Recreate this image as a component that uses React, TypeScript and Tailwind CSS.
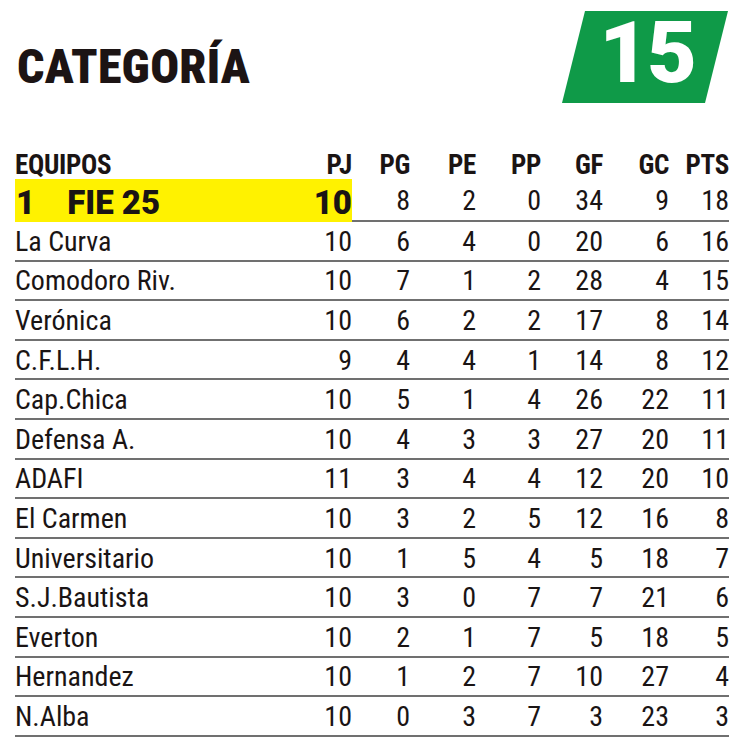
const rows = [
  ["La Curva", 10, 6, 4, 0, 20, 6, 16],
  ["Comodoro Riv.", 10, 7, 1, 2, 28, 4, 15],
  ["Verónica", 10, 6, 2, 2, 17, 8, 14],
  ["C.F.L.H.", 9, 4, 4, 1, 14, 8, 12],
  ["Cap.Chica", 10, 5, 1, 4, 26, 22, 11],
  ["Defensa A.", 10, 4, 3, 3, 27, 20, 11],
  ["ADAFI", 11, 3, 4, 4, 12, 20, 10],
  ["El Carmen", 10, 3, 2, 5, 12, 16, 8],
  ["Universitario", 10, 1, 5, 4, 5, 18, 7],
  ["S.J.Bautista", 10, 3, 0, 7, 7, 21, 6],
  ["Everton", 10, 2, 1, 7, 5, 18, 5],
  ["Hernandez", 10, 1, 2, 7, 10, 27, 4],
  ["N.Alba", 10, 0, 3, 7, 3, 23, 3],
];

// widths of the stat columns after PJ: PG PE PP GF GC PTS
const cols = ["w-[58px]", "w-[66px]", "w-[65px]", "w-[62px]", "w-[66px]", "w-[60px]"];

function Stats({ values }: { values: (string | number)[] }) {
  return (
    <>
      {values.map((v, i) => (
        <div key={i} className={`${cols[i]} shrink-0 text-right`}>
          {v}
        </div>
      ))}
    </>
  );
}

export default function App() {
  return (
    <div className="w-[750px] h-[750px] bg-white text-[#1a1414] font-['Roboto_Condensed',sans-serif] overflow-hidden">
      {/* Title */}
      <div className="flex justify-between items-start h-[144px]">
        <h1 className="mt-[43px] ml-[17px] text-[48px] leading-none font-black tracking-[0.2px] text-[#1c1414]">
          CATEGORÍA
        </h1>
        <div className="mt-[11px] mr-[22px] w-[166px] h-[92px] bg-[#0f9a48] [clip-path:polygon(23px_0,166px_0,143px_92px,0_92px)] flex items-center justify-center">
          <span className="ml-[4px] mt-[-8px] text-white text-[86px] leading-none font-black font-['Roboto',sans-serif] tracking-[-2px]">
            15
          </span>
        </div>
      </div>

      {/* Table */}
      <div className="ml-[15px] w-[718px] pr-[4px]">
        <div className="flex items-end h-[35px] text-[27px] leading-none font-bold tracking-[-0.3px]">
          <div className="w-[337px] flex justify-between">
            <span>EQUIPOS</span>
            <span>PJ</span>
          </div>
          <Stats values={["PG", "PE", "PP", "GF", "GC", "PTS"]} />
        </div>

        <div className="flex items-center h-[43px] border-b-2 border-[#707070] text-[28px] leading-none">
          <div className="w-[337px] h-[43px] -mb-[2px] bg-[#fff200] flex justify-between items-center pt-[3px] font-['Roboto',sans-serif] font-black text-[33px]">
            <span className="flex gap-[32px] ml-[1px]">
              <span>1</span>
              <span>FIE 25</span>
            </span>
            <span>10</span>
          </div>
          <div className="flex pt-[3px]">
            <Stats values={[8, 2, 0, 34, 9, 18]} />
          </div>
        </div>

        {rows.map((r) => (
          <div key={r[0]} className="flex items-center h-[39.6px] border-b-2 border-[#707070] text-[28px] leading-none pt-[2px]">
            <div className="w-[337px] flex justify-between">
              <span>{r[0]}</span>
              <span>{r[1]}</span>
            </div>
            <Stats values={r.slice(2)} />
          </div>
        ))}
      </div>
    </div>
  );
}
